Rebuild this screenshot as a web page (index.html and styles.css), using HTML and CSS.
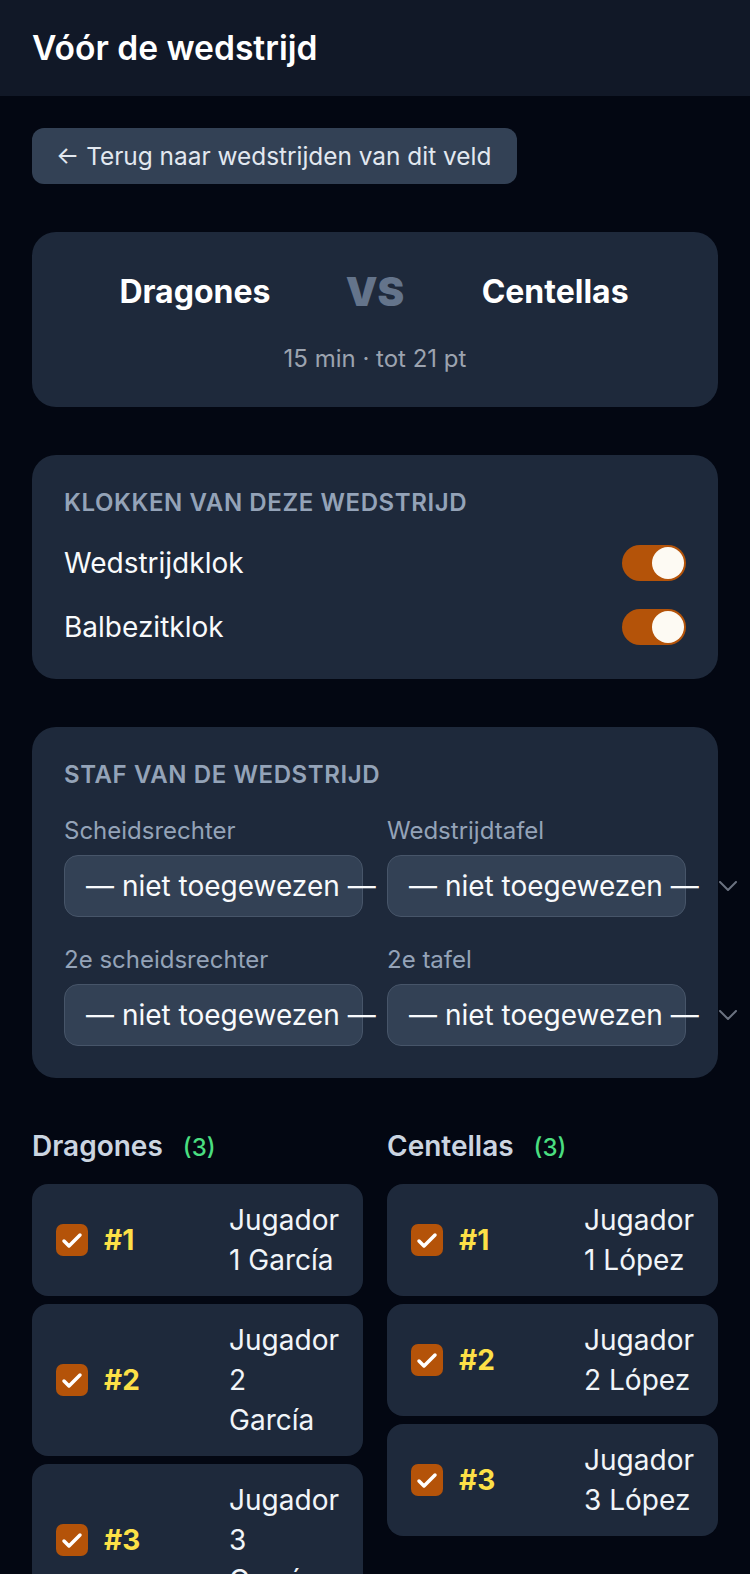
FILE: index.html
```html
<!DOCTYPE html>
<html lang="nl">
<head>
<meta charset="utf-8">
<meta name="viewport" content="width=device-width, initial-scale=1">
<title>Vóór de wedstrijd</title>
<link rel="stylesheet" href="styles.css">
</head>
<body>
<header class="topbar">
  <h1 class="title">Vóór de wedstrijd</h1>
</header>
<main class="page">
  <button class="back" type="button">← Terug naar wedstrijden van dit veld</button>

  <section class="card match">
    <div class="teams">
      <div class="team">Dragones</div>
      <div class="vs">VS</div>
      <div class="team">Centellas</div>
    </div>
    <div class="meta">15 min · tot 21 pt</div>
  </section>

  <section class="card clocks">
    <h2 class="card-title">Klokken van deze wedstrijd</h2>
    <div class="toggle-row">
      <span class="toggle-label">Wedstrijdklok</span>
      <span class="switch"><span class="knob"></span></span>
    </div>
    <div class="toggle-row">
      <span class="toggle-label">Balbezitklok</span>
      <span class="switch"><span class="knob"></span></span>
    </div>
  </section>

  <section class="card staff">
    <h2 class="card-title">Staf van de wedstrijd</h2>
    <div class="staff-grid">
      <div class="field">
        <div class="field-label">Scheidsrechter</div>
        <div class="select"><span class="select-text">— niet toegewezen —</span><svg class="chev" width="18" height="10" viewBox="0 0 18 10"><polyline points="1,1 9,9 17,1" fill="none" stroke="#6b7280" stroke-width="2" stroke-linecap="round" stroke-linejoin="round"/></svg></div>
      </div>
      <div class="field">
        <div class="field-label">Wedstrijdtafel</div>
        <div class="select"><span class="select-text">— niet toegewezen —</span><svg class="chev" width="18" height="10" viewBox="0 0 18 10"><polyline points="1,1 9,9 17,1" fill="none" stroke="#6b7280" stroke-width="2" stroke-linecap="round" stroke-linejoin="round"/></svg></div>
      </div>
      <div class="field">
        <div class="field-label">2e scheidsrechter</div>
        <div class="select"><span class="select-text">— niet toegewezen —</span><svg class="chev" width="18" height="10" viewBox="0 0 18 10"><polyline points="1,1 9,9 17,1" fill="none" stroke="#6b7280" stroke-width="2" stroke-linecap="round" stroke-linejoin="round"/></svg></div>
      </div>
      <div class="field">
        <div class="field-label">2e tafel</div>
        <div class="select"><span class="select-text">— niet toegewezen —</span><svg class="chev" width="18" height="10" viewBox="0 0 18 10"><polyline points="1,1 9,9 17,1" fill="none" stroke="#6b7280" stroke-width="2" stroke-linecap="round" stroke-linejoin="round"/></svg></div>
      </div>
    </div>
  </section>

  <section class="rosters">
    <div class="roster">
      <h3 class="roster-title">Dragones<span class="count">(3)</span></h3>
      <div class="players">
        <div class="player">
          <svg class="check" width="32" height="32" viewBox="0 0 32 32"><rect width="32" height="32" rx="7" fill="#b45309"/><path d="M8 17l5 5 11-11" fill="none" stroke="#fff" stroke-width="3.5" stroke-linecap="round" stroke-linejoin="round"/></svg>
          <span class="num">#1</span>
          <span class="name">Jugador 1 García</span>
        </div>
        <div class="player">
          <svg class="check" width="32" height="32" viewBox="0 0 32 32"><rect width="32" height="32" rx="7" fill="#b45309"/><path d="M8 17l5 5 11-11" fill="none" stroke="#fff" stroke-width="3.5" stroke-linecap="round" stroke-linejoin="round"/></svg>
          <span class="num">#2</span>
          <span class="name">Jugador 2 García</span>
        </div>
        <div class="player">
          <svg class="check" width="32" height="32" viewBox="0 0 32 32"><rect width="32" height="32" rx="7" fill="#b45309"/><path d="M8 17l5 5 11-11" fill="none" stroke="#fff" stroke-width="3.5" stroke-linecap="round" stroke-linejoin="round"/></svg>
          <span class="num">#3</span>
          <span class="name">Jugador 3 García</span>
        </div>
      </div>
    </div>
    <div class="roster">
      <h3 class="roster-title">Centellas<span class="count">(3)</span></h3>
      <div class="players">
        <div class="player">
          <svg class="check" width="32" height="32" viewBox="0 0 32 32"><rect width="32" height="32" rx="7" fill="#b45309"/><path d="M8 17l5 5 11-11" fill="none" stroke="#fff" stroke-width="3.5" stroke-linecap="round" stroke-linejoin="round"/></svg>
          <span class="num">#1</span>
          <span class="name">Jugador 1 López</span>
        </div>
        <div class="player">
          <svg class="check" width="32" height="32" viewBox="0 0 32 32"><rect width="32" height="32" rx="7" fill="#b45309"/><path d="M8 17l5 5 11-11" fill="none" stroke="#fff" stroke-width="3.5" stroke-linecap="round" stroke-linejoin="round"/></svg>
          <span class="num">#2</span>
          <span class="name">Jugador 2 López</span>
        </div>
        <div class="player">
          <svg class="check" width="32" height="32" viewBox="0 0 32 32"><rect width="32" height="32" rx="7" fill="#b45309"/><path d="M8 17l5 5 11-11" fill="none" stroke="#fff" stroke-width="3.5" stroke-linecap="round" stroke-linejoin="round"/></svg>
          <span class="num">#3</span>
          <span class="name">Jugador 3 López</span>
        </div>
      </div>
    </div>
  </section>
</main>
</body>
</html>
```

FILE: styles.css
```css
* { box-sizing: border-box; }

html, body {
  margin: 0;
  background: #030712;
}

body {
  font-family: Inter, "Noto Sans", "Liberation Sans", sans-serif;
  color: #f1f5f9;
}

.topbar {
  background: #111827;
  height: 96px;
  display: flex;
  align-items: center;
  padding: 0 32px;
}

.title {
  margin: 0;
  font-size: 33.6px;
  line-height: 40px;
  font-weight: 600;
  color: #ffffff;
}

.page {
  padding: 32px;
  display: flex;
  flex-direction: column;
  gap: 48px;
}

.back {
  align-self: flex-start;
  font-family: inherit;
  font-size: 24.4px;
  line-height: 32px;
  font-weight: 400;
  color: #e2e8f0;
  background: #334155;
  border: 0;
  border-radius: 12px;
  padding: 12px 26px 12px 24px;
  cursor: pointer;
}

.card {
  background: #1e293b;
  border-radius: 24px;
  padding: 32px;
}

/* match */
.teams {
  display: grid;
  grid-template-columns: minmax(0, 1fr) auto minmax(0, 1fr);
  column-gap: 20px;
  align-items: center;
}

.team {
  text-align: center;
  font-size: 32px;
  line-height: 48px;
  font-weight: 700;
  color: #ffffff;
}

.vs {
  font-size: 40px;
  line-height: 56px;
  font-weight: 900;
  color: #64748b;
}

.meta {
  margin-top: 23px;
  text-align: center;
  font-size: 24px;
  line-height: 32px;
  color: #9ca3af;
}

/* section headings */
.card-title {
  margin: 0 0 24px;
  font-size: 24px;
  line-height: 32px;
  font-weight: 600;
  text-transform: uppercase;
  letter-spacing: 0.6px;
  color: #94a3b8;
}

/* clocks */
.toggle-row {
  display: flex;
  align-items: center;
  justify-content: space-between;
  height: 40px;
}

.toggle-row + .toggle-row {
  margin-top: 24px;
}

.toggle-label {
  font-size: 28px;
  line-height: 40px;
  color: #f8fafc;
}

.switch {
  width: 64px;
  height: 36px;
  border-radius: 18px;
  background: #b45309;
  padding: 2px;
  display: flex;
  justify-content: flex-end;
  align-items: center;
}

.knob {
  width: 32px;
  height: 32px;
  border-radius: 50%;
  background: #fdfaf3;
}

/* staff */
.staff-grid {
  display: grid;
  grid-template-columns: repeat(2, minmax(0, 1fr));
  column-gap: 24px;
  row-gap: 27px;
}

.field-label {
  font-size: 24px;
  line-height: 32px;
  color: #94a3b8;
  margin-bottom: 8px;
}

.select {
  position: relative;
  height: 62px;
  border: 1px solid #475569;
  border-radius: 14px;
  background: #334155;
  display: flex;
  align-items: center;
  padding-left: 21px;
  white-space: nowrap;
}

.select-text {
  flex: none;
  font-size: 28px;
  line-height: 40px;
  color: #f8fafc;
}

.chev {
  flex: none;
  margin-left: 20px;
}

/* rosters */
.rosters {
  display: grid;
  grid-template-columns: repeat(2, minmax(0, 1fr));
  column-gap: 24px;
  align-items: start;
}

.roster-title {
  margin: 0 0 16px;
  font-size: 28px;
  line-height: 40px;
  font-weight: 600;
  color: #cbd5e1;
}

.count {
  margin-left: 20px;
  font-size: 24px;
  font-weight: 500;
  color: #4ade80;
}

.players {
  display: flex;
  flex-direction: column;
  gap: 8px;
}

.player {
  display: flex;
  align-items: center;
  gap: 16px;
  background: #1e293b;
  border-radius: 16px;
  padding: 16px 24px;
}

.check {
  flex: none;
  display: block;
}

.num {
  flex: 1;
  font-size: 28px;
  line-height: 40px;
  font-weight: 700;
  color: #fde047;
}

.name {
  width: min-content;
  font-size: 28px;
  line-height: 40px;
  color: #f1f5f9;
}
```
